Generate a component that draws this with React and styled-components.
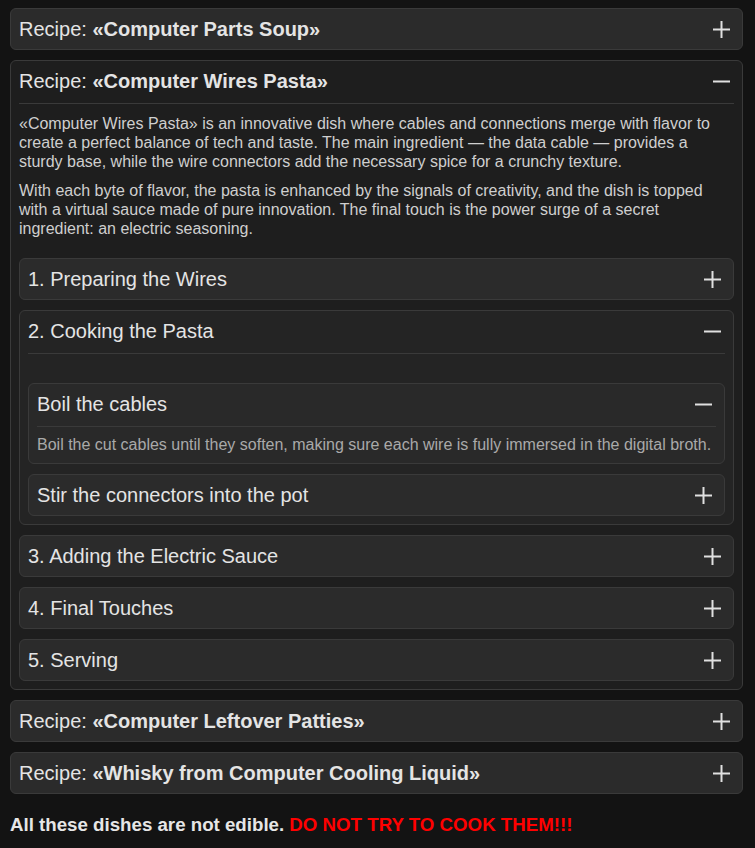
import React, { useState } from 'react';
import styled, { createGlobalStyle } from 'styled-components';

const GlobalStyle = createGlobalStyle`
  html, body {
    margin: 0;
    background: #131313;
  }
  body {
    padding: 8px 12px 10px 10px;
    font-family: "Liberation Sans", Arial, sans-serif;
    color: #e2e2e2;
  }
`;

const recipes = [
  { name: 'Computer Parts Soup' },
  {
    name: 'Computer Wires Pasta',
    open: true,
    paragraphs: [
      '«Computer Wires Pasta» is an innovative dish where cables and connections merge with flavor to create a perfect balance of tech and taste. The main ingredient — the data cable — provides a sturdy base, while the wire connectors add the necessary spice for a crunchy texture.',
      'With each byte of flavor, the pasta is enhanced by the signals of creativity, and the dish is topped with a virtual sauce made of pure innovation. The final touch is the power surge of a secret ingredient: an electric seasoning.',
    ],
    steps: [
      { title: '1. Preparing the Wires' },
      {
        title: '2. Cooking the Pasta',
        open: true,
        substeps: [
          {
            title: 'Boil the cables',
            open: true,
            text: 'Boil the cut cables until they soften, making sure each wire is fully immersed in the digital broth.',
          },
          { title: 'Stir the connectors into the pot' },
        ],
      },
      { title: '3. Adding the Electric Sauce' },
      { title: '4. Final Touches' },
      { title: '5. Serving' },
    ],
  },
  { name: 'Computer Leftover Patties' },
  { name: 'Whisky from Computer Cooling Liquid' },
];

function ToggleIcon({ open }) {
  return (
    <Icon viewBox="0 0 17 17" aria-hidden="true">
      <path d="M0 8.5H17" />
      {!open && <path d="M8.5 0V17" />}
    </Icon>
  );
}

function Fold({ title, level, defaultOpen, contentTop, children }) {
  const [open, setOpen] = useState(!!defaultOpen);
  return (
    <Panel $open={open} $level={level}>
      <Summary $open={open} onClick={() => setOpen(!open)}>
        <SummaryText>{title}</SummaryText>
        <ToggleIcon open={open} />
      </Summary>
      {open && <Content $top={contentTop}>{children}</Content>}
    </Panel>
  );
}

export default function App() {
  return (
    <>
      <GlobalStyle />
      <List>
        {recipes.map((r) => (
          <Fold
            key={r.name}
            level={0}
            defaultOpen={r.open}
            contentTop={10}
            title={<>Recipe: <b>«{r.name}»</b></>}
          >
            {r.paragraphs && r.paragraphs.map((p, i) => <Para key={i}>{p}</Para>)}
            {r.steps && (
              <Steps>
                {r.steps.map((s) => (
                  <Fold key={s.title} level={1} defaultOpen={s.open} contentTop={29} title={s.title}>
                    {s.substeps && (
                      <List>
                        {s.substeps.map((sub) => (
                          <Fold key={sub.title} level={2} defaultOpen={sub.open} contentTop={9} title={sub.title}>
                            <SmallText>{sub.text}</SmallText>
                          </Fold>
                        ))}
                      </List>
                    )}
                  </Fold>
                ))}
              </Steps>
            )}
          </Fold>
        ))}
      </List>
      <Warning>
        All these dishes are not edible. <Danger>DO NOT TRY TO COOK THEM!!!</Danger>
      </Warning>
    </>
  );
}

const openBg = ['#1e1e1e', '#242424', '#292929'];

const List = styled.div`
  display: flex;
  flex-direction: column;
  gap: 10px;
`;

const Steps = styled(List)`
  margin-top: 20px;
`;

const Panel = styled.div`
  background: ${(p) => (p.$open ? openBg[p.$level] : '#2b2b2b')};
  border: 1px solid #3a3a3a;
  border-radius: 6px;
  padding: 0 8px;
`;

const Summary = styled.div`
  display: flex;
  align-items: center;
  justify-content: space-between;
  padding: 8px 4px ${(p) => (p.$open ? '10px' : '8px')} 0;
  border-bottom: ${(p) => (p.$open ? '1px solid #3a3a3a' : 'none')};
  cursor: pointer;
  user-select: none;
`;

const SummaryText = styled.span`
  font-size: 20px;
  line-height: 24px;
  color: #e4e4e4;

  b {
    font-weight: 700;
  }
`;

const Icon = styled.svg`
  width: 17px;
  height: 17px;
  flex-shrink: 0;
  stroke: #e0e0e0;
  stroke-width: 2;
  fill: none;
`;

const Content = styled.div`
  padding: ${(p) => p.$top}px 0 8px;
`;

const Para = styled.p`
  margin: 0 0 10px;
  font-size: 16px;
  line-height: 19px;
  color: #cfcfcf;

  &:last-of-type {
    margin-bottom: 0;
  }
`;

const SmallText = styled.p`
  margin: 0 0 1px;
  font-size: 16px;
  line-height: 18px;
  color: #a9a9a9;
`;

const Warning = styled.p`
  margin: 20px 0 0;
  font-size: 18.7px;
  font-weight: 700;
  color: #e6e6e6;
`;

const Danger = styled.span`
  color: #ff0000;
`;
